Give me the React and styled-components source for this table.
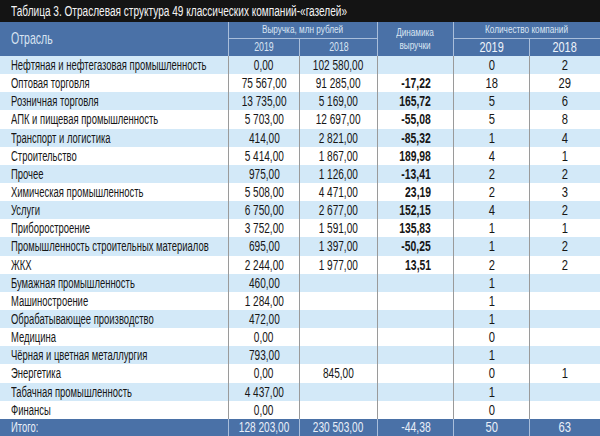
import React from "react";
import styled, { createGlobalStyle } from "styled-components";

const Global = createGlobalStyle`
  html, body { margin: 0; padding: 0; background: #ffffff; }
  body { width: 600px; height: 436px; overflow: hidden; }
  * { box-sizing: border-box; }
`;

const FONT = `"Liberation Sans", Arial, sans-serif`;

const Page = styled.div`
  width: 600px;
  height: 436px;
  display: flex;
  flex-direction: column;
  font-family: ${FONT};
  background: #fff;
`;

const TitleBar = styled.div`
  height: 22px;
  background: #141414;
  color: #f4f4f4;
  font-size: 14px;
  line-height: 22px;
  padding-left: 11px;
  white-space: nowrap;
`;

const Txt = styled.span`
  display: inline-block;
  white-space: nowrap;
  transform: scaleX(${(p) => p.$sx || 0.78});
  transform-origin: ${(p) =>
    p.$align === "left" ? "left center" : p.$align === "right" ? "right center" : "center center"};
`;

const Table = styled.div`
  display: grid;
  grid-template-columns: 228px 71px 78px 76px 76px 71px;
  grid-template-rows: 17px 17px repeat(20, 18.15px) 17px;
`;

const HeadCell = styled.div`
  background: #4a71a7;
  color: ${(p) => (p.$pale ? "#d9e4f2" : "#eef3fa")};
  display: flex;
  align-items: center;
  justify-content: ${(p) => (p.$left ? "flex-start" : "center")};
  padding-left: ${(p) => (p.$left ? "11px" : "0")};
  font-size: ${(p) => p.$size || "12px"};
  line-height: 1.35;
  text-align: center;
  border-left: ${(p) => (p.$first ? "none" : "1px solid #a9bedb")};
  border-bottom: ${(p) => (p.$under ? "1px solid #a9bedb" : "none")};
  grid-column: ${(p) => p.$col};
  grid-row: ${(p) => p.$row};
  white-space: nowrap;
`;

const Cell = styled.div`
  background: ${(p) => (p.$stripe ? "#d3e9f8" : "#ffffff")};
  color: #161616;
  font-size: 14px;
  font-weight: ${(p) => (p.$bold ? 700 : 400)};
  display: flex;
  align-items: center;
  justify-content: ${(p) =>
    p.$align === "left" ? "flex-start" : p.$align === "right" ? "flex-end" : "center"};
  padding-left: ${(p) => (p.$align === "left" ? "11px" : "0")};
  padding-right: ${(p) => (p.$align === "right" ? "22px" : "0")};
  border-left: ${(p) => (p.$first ? "none" : "1px solid #9a9a9a")};
  white-space: nowrap;
`;

const TotalCell = styled.div`
  background: #4a71a7;
  color: #e9eff8;
  font-size: 14px;
  display: flex;
  align-items: center;
  justify-content: ${(p) =>
    p.$align === "left" ? "flex-start" : p.$align === "right" ? "flex-end" : "center"};
  padding-left: ${(p) => (p.$align === "left" ? "11px" : "0")};
  padding-right: ${(p) => (p.$align === "right" ? "22px" : "0")};
  border-left: ${(p) => (p.$first ? "none" : "1px solid #a9bedb")};
  white-space: nowrap;
`;

const rows = [
  ["Нефтяная и нефтегазовая промышленность", "0,00", "102 580,00", "", "0", "2"],
  ["Оптовая торговля", "75 567,00", "91 285,00", "-17,22", "18", "29"],
  ["Розничная торговля", "13 735,00", "5 169,00", "165,72", "5", "6"],
  ["АПК и пищевая промышленность", "5 703,00", "12 697,00", "-55,08", "5", "8"],
  ["Транспорт и логистика", "414,00", "2 821,00", "-85,32", "1", "4"],
  ["Строительство", "5 414,00", "1 867,00", "189,98", "4", "1"],
  ["Прочее", "975,00", "1 126,00", "-13,41", "2", "2"],
  ["Химическая промышленность", "5 508,00", "4 471,00", "23,19", "2", "3"],
  ["Услуги", "6 750,00", "2 677,00", "152,15", "4", "2"],
  ["Приборостроение", "3 752,00", "1 591,00", "135,83", "1", "1"],
  ["Промышленность строительных материалов", "695,00", "1 397,00", "-50,25", "1", "2"],
  ["ЖКХ", "2 244,00", "1 977,00", "13,51", "2", "2"],
  ["Бумажная промышленность", "460,00", "", "", "1", ""],
  ["Машиностроение", "1 284,00", "", "", "1", ""],
  ["Обрабатывающее производство", "472,00", "", "", "1", ""],
  ["Медицина", "0,00", "", "", "0", ""],
  ["Чёрная и цветная металлургия", "793,00", "", "", "1", ""],
  ["Энергетика", "0,00", "845,00", "", "0", "1"],
  ["Табачная промышленность", "4 437,00", "", "", "1", ""],
  ["Финансы", "0,00", "", "", "0", ""],
];

const total = ["Итого:", "128 203,00", "230 503,00", "-44,38", "50", "63"];

const aligns = ["left", "center", "center", "right", "center", "center"];
const scales = [0.675, 0.72, 0.72, 0.74, 0.8, 0.8];

export default function App() {
  return (
    <Page>
      <Global />
      <TitleBar>
        <Txt $align="left" $sx={0.72}>
          Таблица 3. Отраслевая структура 49 классических компаний-«газелей»
        </Txt>
      </TitleBar>
      <Table>
        <HeadCell $first $left $col="1" $row="1 / span 2" $size="17px" $pale>
          <Txt $align="left" $sx={0.62}>Отрасль</Txt>
        </HeadCell>
        <HeadCell $col="2 / span 2" $row="1" $size="10px" $under $pale>
          <Txt $sx={0.82}>Выручка, млн рублей</Txt>
        </HeadCell>
        <HeadCell $col="2" $row="2" $size="12.5px" $pale>
          <Txt $sx={0.7}>2019</Txt>
        </HeadCell>
        <HeadCell $col="3" $row="2" $size="12.5px" $pale>
          <Txt $sx={0.7}>2018</Txt>
        </HeadCell>
        <HeadCell $col="4" $row="1 / span 2" $size="10px" $pale>
          <Txt $sx={0.82}>
            Динамика
            <br />
            выручки
          </Txt>
        </HeadCell>
        <HeadCell $col="5 / span 2" $row="1" $size="10px" $under $pale>
          <Txt $sx={0.82}>Количество компаний</Txt>
        </HeadCell>
        <HeadCell $col="5" $row="2" $size="14px">
          <Txt>2019</Txt>
        </HeadCell>
        <HeadCell $col="6" $row="2" $size="14px">
          <Txt>2018</Txt>
        </HeadCell>

        {rows.map((r, i) =>
          r.map((v, j) => (
            <Cell
              key={`${i}-${j}`}
              $stripe={i % 2 === 0}
              $first={j === 0}
              $align={aligns[j]}
              $bold={j === 3}
            >
              {v && (
                <Txt $align={aligns[j]} $sx={scales[j]}>
                  {v}
                </Txt>
              )}
            </Cell>
          ))
        )}

        {total.map((v, j) => (
          <TotalCell key={`t-${j}`} $first={j === 0} $align={aligns[j]}>
            <Txt $align={aligns[j]} $sx={scales[j]}>
              {v}
            </Txt>
          </TotalCell>
        ))}
      </Table>
    </Page>
  );
}
